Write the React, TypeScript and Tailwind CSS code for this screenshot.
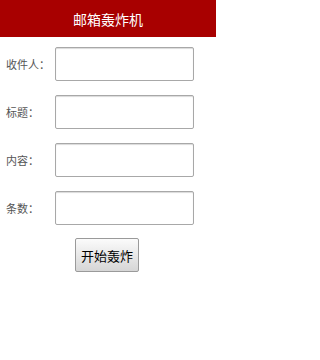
export default function App() {
  const fields = ["收件人：", "标题：", "内容：", "条数："];

  return (
    <div
      className="w-[216px] h-[360px] bg-white"
      style={{ fontFamily: '"Noto Sans CJK SC", "Noto Sans", sans-serif' }}
    >
      <header className="h-[37px] bg-[#a80000] flex items-center justify-center">
        <h1 className="text-white text-[14px] font-normal leading-none">邮箱轰炸机</h1>
      </header>

      <div className="flex flex-col gap-[14px] pt-[10px]">
        {fields.map((label) => (
          <div key={label} className="flex items-center">
            <span className="w-[55px] pl-[6px] text-[11px] text-[#555]">
              {label}
            </span>
            <input
              className="w-[139px] h-[34px] border border-[#a8a8a8] rounded-[2px] bg-white shadow-[inset_0_1px_1px_rgba(0,0,0,0.15)] outline-none"
              type="text"
            />
          </div>
        ))}
      </div>

      <div className="flex pl-[75px] pt-[13px]">
        <button className="w-[64px] h-[34px] border border-[#9a9a9a] rounded-[2px] bg-gradient-to-b from-[#fbfbfb] to-[#d6d6d6] text-[13px] text-black leading-none">
          开始轰炸
        </button>
      </div>
    </div>
  );
}
